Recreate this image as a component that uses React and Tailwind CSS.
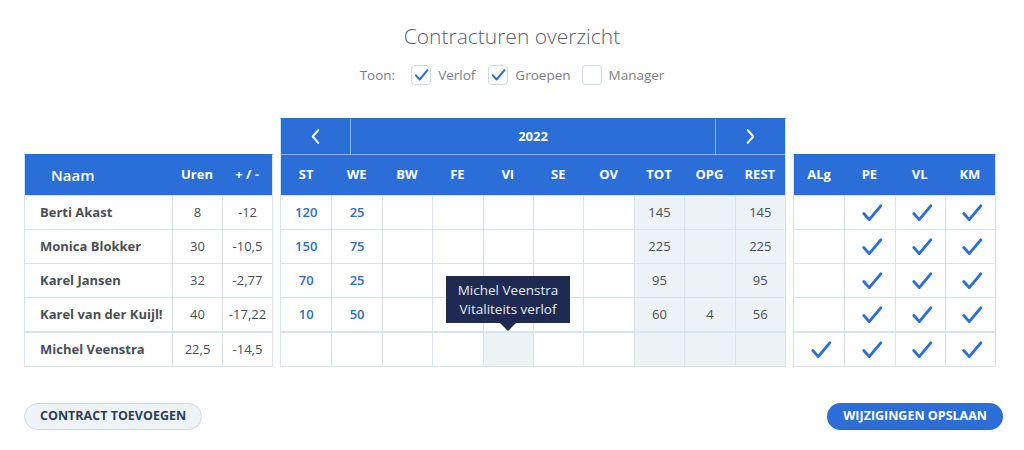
import React from "react";

const rows = [
  { name: "Berti Akast", uren: "8", pm: "-12", st: "120", we: "25", tot: "145", opg: "", rest: "145", checks: [false, true, true, true] },
  { name: "Monica Blokker", uren: "30", pm: "-10,5", st: "150", we: "75", tot: "225", opg: "", rest: "225", checks: [false, true, true, true] },
  { name: "Karel Jansen", uren: "32", pm: "-2,77", st: "70", we: "25", tot: "95", opg: "", rest: "95", checks: [false, true, true, true] },
  { name: "Karel van der Kuijl!", uren: "40", pm: "-17,22", st: "10", we: "50", tot: "60", opg: "4", rest: "56", checks: [false, true, true, true] },
  { name: "Michel Veenstra", uren: "22,5", pm: "-14,5", st: "", we: "", tot: "", opg: "", rest: "", checks: [true, true, true, true] },
];

const cols = ["ST", "WE", "BW", "FE", "VI", "SE", "OV", "TOT", "OPG", "REST"];

const Check = ({ className = "" }) => (
  <svg viewBox="0 0 20 18" className={className} fill="none">
    <path d="M2.5 9.5 L7.5 15 L18 2.5" stroke="#2b6ed8" strokeWidth="2.6" strokeLinecap="round" strokeLinejoin="round" />
  </svg>
);

const Box = ({ checked }) => (
  <span className="w-[20px] h-[20px] rounded-[4px] border border-[#c9dcea] bg-white flex items-center justify-center">
    {checked && <Check className="w-[15px] h-[14px]" />}
  </span>
);

// first row has a plain top line, the last row a heavier one
const rowClass = (i) => (i === 4 ? "h-[35px] border-t-2" : "h-[34px] border-t");

export default function App() {
  return (
    <div className="w-[1024px] h-[450px] bg-white font-['Open_Sans',sans-serif] text-[#4a4f57]">
      {/* Title */}
      <h1 className="pt-[21px] text-center text-[21px] leading-[30px] font-light text-[#5a616d]">
        Contracturen overzicht
      </h1>

      {/* Toon filters */}
      <div className="mt-[14px] flex items-center justify-center h-[20px] text-[13.5px] text-[#7a8089]">
        <span className="mr-[16px]">Toon:</span>
        <Box checked />
        <span className="ml-[7px] mr-[13px]">Verlof</span>
        <Box checked />
        <span className="ml-[7px] mr-[11px]">Groepen</span>
        <Box />
        <span className="ml-[7px]">Manager</span>
      </div>

      {/* Tables */}
      <div className="mt-[33px] pl-[24px] flex items-end">
        {/* Left table */}
        <div className="w-[249px] border border-[#d5e5ee] border-t-[#2b6ed8]">
          <div className="h-[40px] bg-[#2b6ed8] grid grid-cols-[147px_50px_1fr] items-center text-white font-bold text-[13px]">
            <span className="pl-[26px] text-[15px] font-semibold">Naam</span>
            <span className="text-center">Uren</span>
            <span className="text-center">+ / -</span>
          </div>
          {rows.map((r, i) => (
            <div key={i} className={`grid grid-cols-[147px_50px_1fr] border-[#d5e5ee] ${rowClass(i)} text-[13px]`}>
              <span className="pl-[15px] flex items-center font-bold text-[#4a4f57]">{r.name}</span>
              <span className="flex items-center justify-center border-l border-[#d5e5ee]">{r.uren}</span>
              <span className="flex items-center justify-center border-l border-[#d5e5ee]">{r.pm}</span>
            </div>
          ))}
        </div>

        {/* Middle table */}
        <div className="relative ml-[7px] w-[506px] border border-[#d5e5ee] border-t-[#2b6ed8]">
          <div className="h-[36px] bg-[#2b6ed8] grid grid-cols-[70px_1fr_70px] text-white border-b border-[#8fb1e6]">
            <span className="flex items-center justify-center border-r border-[#8fb1e6]">
              <svg viewBox="0 0 12 18" className="w-[11px] h-[17px]" fill="none">
                <path d="M9 2 L3 9 L9 16" stroke="white" strokeWidth="2.2" strokeLinecap="round" strokeLinejoin="round" />
              </svg>
            </span>
            <span className="flex items-center justify-center text-[13px] font-bold">2022</span>
            <span className="flex items-center justify-center border-l border-[#8fb1e6]">
              <svg viewBox="0 0 12 18" className="w-[11px] h-[17px]" fill="none">
                <path d="M3 2 L9 9 L3 16" stroke="white" strokeWidth="2.2" strokeLinecap="round" strokeLinejoin="round" />
              </svg>
            </span>
          </div>
          <div className="h-[40px] bg-[#2b6ed8] grid grid-cols-10 items-center text-white font-bold text-[13px]">
            {cols.map((c) => (
              <span key={c} className="text-center">{c}</span>
            ))}
          </div>
          {rows.map((r, i) => {
            const vals = [r.st, r.we, "", "", "", "", "", r.tot, r.opg, r.rest];
            return (
              <div key={i} className={`grid grid-cols-10 border-[#d5e5ee] ${rowClass(i)} text-[13px]`}>
                {vals.map((v, j) => {
                  const gray = j >= 7 || (i === 4 && j === 4);
                  const blue = j < 2;
                  return (
                    <span
                      key={j}
                      className={`flex items-center justify-center border-[#d5e5ee] ${j > 0 ? "border-l" : ""} ${gray ? "bg-[#edf2f6]" : ""} ${blue ? "text-[#2f6cc9] font-semibold" : ""}`}
                    >
                      {v}
                    </span>
                  );
                })}
              </div>
            );
          })}

          {/* Tooltip */}
          <div className="absolute left-[165px] top-[157px] w-[124px] h-[47px] bg-[#1e2a52] text-[#e3e8f1] text-[13.5px] leading-[19px] flex flex-col items-center justify-center">
            <span>Michel Veenstra</span>
            <span>Vitaliteits verlof</span>
            <span className="absolute left-1/2 -translate-x-1/2 top-full w-0 h-0 border-l-[8px] border-r-[8px] border-t-[8px] border-l-transparent border-r-transparent border-t-[#1e2a52]" />
          </div>
        </div>

        {/* Right table */}
        <div className="ml-[7px] w-[203px] border border-[#d5e5ee] border-t-[#2b6ed8]">
          <div className="h-[40px] bg-[#2b6ed8] grid grid-cols-4 items-center text-white font-bold text-[13px]">
            {["ALg", "PE", "VL", "KM"].map((c) => (
              <span key={c} className="text-center">{c}</span>
            ))}
          </div>
          {rows.map((r, i) => (
            <div key={i} className={`grid grid-cols-4 border-[#d5e5ee] ${rowClass(i)}`}>
              {r.checks.map((c, j) => (
                <span key={j} className={`flex items-center justify-center pl-[4px] border-[#d5e5ee] ${j > 0 ? "border-l" : ""}`}>
                  {c && <Check className="w-[22px] h-[20px]" />}
                </span>
              ))}
            </div>
          ))}
        </div>
      </div>

      {/* Buttons */}
      <div className="mt-[36px] pl-[24px] pr-[21px] flex justify-between">
        <button className="h-[27px] px-[15px] rounded-full bg-[#eef3f8] border border-[#c9dcea] text-[#2d3f55] text-[12.5px] font-bold">
          CONTRACT TOEVOEGEN
        </button>
        <button className="h-[27px] px-[16px] rounded-full bg-[#2b6ed8] text-white text-[12.5px] font-bold">
          WIJZIGINGEN OPSLAAN
        </button>
      </div>
    </div>
  );
}
